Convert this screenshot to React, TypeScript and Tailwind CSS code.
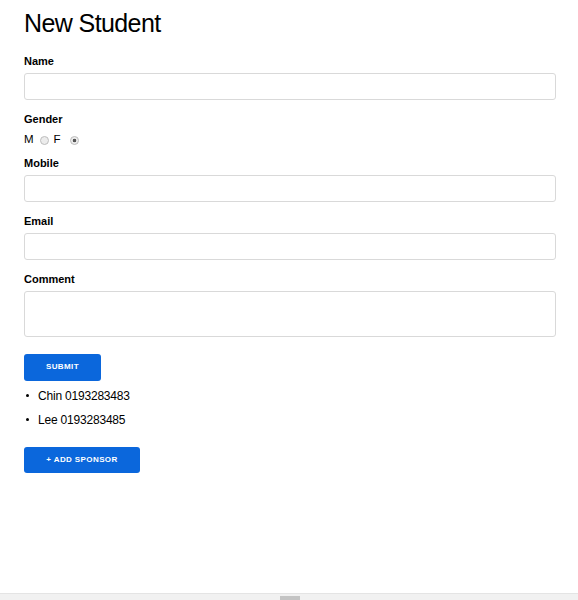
type FieldProps = {
  label: string;
  multiline?: boolean;
};

const Field = ({ label, multiline }: FieldProps) => {
  return (
    <div className="flex flex-col">
      <label className="mb-[5px] text-[11px] font-bold leading-[13px] text-black">{label}</label>
      {multiline ? (
        <textarea className="h-[46px] w-full resize-none rounded-[3px] border border-[#d9d9d9] bg-white px-2 py-1 text-[12px] outline-none" />
      ) : (
        <input
          type="text"
          className="h-[27px] w-full rounded-[3px] border border-[#d9d9d9] bg-white px-2 text-[12px] outline-none"
        />
      )}
    </div>
  );
};

const Radio = ({ name, checked }: { name: string; checked?: boolean }) => (
  <input
    type="radio"
    name={name}
    defaultChecked={checked}
    className="h-[9px] w-[9px] appearance-none rounded-full border border-[#bdbdbd] bg-[#ececec] checked:bg-[radial-gradient(circle,#555_0,#555_32%,#ececec_42%)]"
  />
);

const sponsors = [
  { name: "Chin", phone: "0193283483" },
  { name: "Lee", phone: "0193283485" },
];

const App = () => {
  return (
    <div className="flex h-screen flex-col bg-white font-['Liberation_Sans',Arial,sans-serif] text-black">
      <div className="flex-1 pl-[24px] pr-[22px] pt-[8px]">
        <h1 className="text-[25px] font-normal leading-[30px] tracking-[-0.6px]">New Student</h1>

        <form className="mt-[17px] flex flex-col" onSubmit={(e) => e.preventDefault()}>
          <Field label="Name" />

          <div className="mt-[13px] flex flex-col">
            <span className="text-[11px] font-bold leading-[13px]">Gender</span>
            <div className="mt-[5px] mb-[8px] flex h-[18px] items-center text-[11.5px]">
              <span>M</span>
              <span className="ml-[6px] flex items-center">
                <Radio name="gender" />
              </span>
              <span className="ml-[5px]">F</span>
              <span className="ml-[9px] flex items-center">
                <Radio name="gender" checked />
              </span>
            </div>
          </div>

          <Field label="Mobile" />
          <div className="mt-[13px]">
            <Field label="Email" />
          </div>
          <div className="mt-[13px]">
            <Field label="Comment" multiline />
          </div>

          <div className="mt-[15px]">
            <button
              type="submit"
              className="h-[27px] w-[77px] rounded-[3px] bg-[#0b67dc] text-[8px] font-bold uppercase tracking-[0.4px] text-white"
            >
              Submit
            </button>
          </div>
        </form>

        <ul className="mt-[3px]">
          {sponsors.map((s) => (
            <li key={s.phone} className="flex h-[24px] items-center text-[12px] tracking-[-0.2px]">
              <span className="ml-[2px] h-[3px] w-[3px] rounded-full bg-black" />
              <span className="ml-[9px]">
                {s.name} {s.phone}
              </span>
            </li>
          ))}
        </ul>

        <button
          type="button"
          className="mt-[15px] h-[26px] w-[116px] rounded-[3px] bg-[#0b67dc] text-[8px] font-bold uppercase tracking-[0.4px] text-white"
        >
          + Add Sponsor
        </button>
      </div>

      {/* horizontal scroll strip */}
      <div className="flex h-[7px] border-t border-[#e4e4e4] bg-[#f1f1f1] pl-[280px]">
        <div className="mt-[2px] h-[4px] w-[20px] bg-[#c4c4c4]" />
      </div>
    </div>
  );
};

export default App;
